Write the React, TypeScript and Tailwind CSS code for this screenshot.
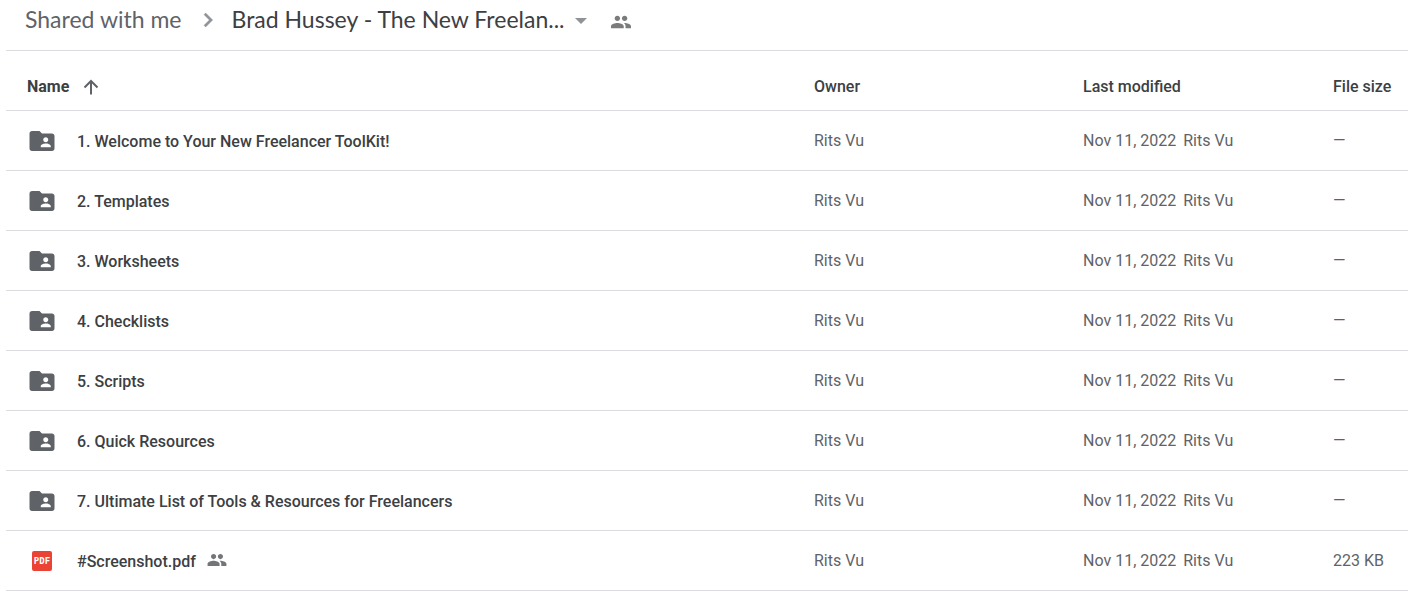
import React from 'react';

interface FileItem {
    name: string;
    type: 'folder' | 'pdf';
    size: string;
}

const OWNER = 'Rits Vu';
const MODIFIED = 'Nov 11, 2022';

const files: FileItem[] = [
    { name: '1. Welcome to Your New Freelancer ToolKit!', type: 'folder', size: '—' },
    { name: '2. Templates', type: 'folder', size: '—' },
    { name: '3. Worksheets', type: 'folder', size: '—' },
    { name: '4. Checklists', type: 'folder', size: '—' },
    { name: '5. Scripts', type: 'folder', size: '—' },
    { name: '6. Quick Resources', type: 'folder', size: '—' },
    { name: '7. Ultimate List of Tools & Resources for Freelancers', type: 'folder', size: '—' },
    { name: '#Screenshot.pdf', type: 'pdf', size: '223 KB' },
];

const ChevronIcon = () => (
    <svg className="h-7 w-7 shrink-0 text-[#8f9297]" viewBox="0 0 24 24" fill="currentColor" aria-hidden="true">
        <path d="M8.6 16.6 13.2 12 8.6 7.4 10 6l6 6-6 6z" stroke="currentColor" strokeWidth="0.4" />
    </svg>
);

const SharedFolderIcon = () => (
    <svg className="h-[30px] w-[30px] text-[#5f6368]" viewBox="0 0 24 24" fill="currentColor" aria-hidden="true">
        <path d="M20 6h-8l-2-2H4c-1.1 0-2 .9-2 2v12c0 1.1.9 2 2 2h16c1.1 0 2-.9 2-2V8c0-1.1-.9-2-2-2zm-5 3c1.1 0 2 .9 2 2s-.9 2-2 2-2-.9-2-2 .9-2 2-2zm4 8h-8v-1c0-1.33 2.67-2 4-2s4 .67 4 2v1z" />
    </svg>
);

const PdfIcon = () => (
    <svg className="h-[30px] w-[30px]" viewBox="0 0 30 30" aria-hidden="true">
        <rect x="5" y="5" width="20" height="20" rx="2" fill="#ea4335" />
        <text x="15" y="18" textAnchor="middle" fill="#fff" className="font-['DejaVu_Sans_Mono',monospace] text-[9px] font-bold">
            PDF
        </text>
    </svg>
);

const PeopleIcon = ({ className }: { className: string }) => (
    <svg className={className} viewBox="1 5 22 14" fill="currentColor" aria-hidden="true">
        <path d="M16 11c1.66 0 2.99-1.34 2.99-3S17.66 5 16 5s-3 1.34-3 3 1.34 3 3 3zm-8 0c1.66 0 2.99-1.34 2.99-3S9.66 5 8 5 5 6.34 5 8s1.34 3 3 3zm0 2c-2.33 0-7 1.17-7 3.5V19h14v-2.5C15 14.17 10.33 13 8 13zm8 0c-.29 0-.62.02-.97.05 1.16.84 1.97 1.97 1.97 3.45V19h6v-2.5c0-2.33-4.67-3.5-7-3.5z" />
    </svg>
);

const Breadcrumbs = () => (
    <nav className="flex h-[50px] items-start pl-[19px] font-['Lato',sans-serif] text-[23px] leading-[38px]" aria-label="Breadcrumb">
        <a href="#shared" className="text-[#5f6368]">Shared with me</a>
        <span className="mr-[10px] ml-3 flex h-10 items-center">
            <ChevronIcon />
        </span>
        <button type="button" className="flex items-center whitespace-nowrap text-[#3c4043]">
            Brad Hussey - The New Freelan...
            <svg className="mt-1 ml-[10px] h-[6px] w-3 text-[#8f9297]" viewBox="0 0 12 6" fill="currentColor" aria-hidden="true">
                <path d="M0 0h12L6 6z" />
            </svg>
        </button>
        <button type="button" className="ml-6 flex h-11 items-center text-[#7a7b7d]" aria-label="Manage access">
            <PeopleIcon className="h-[14px] w-5" />
        </button>
    </nav>
);

const FileRow = ({ file }: { file: FileItem }) => (
    <tr className="h-[60px] border-b border-[#dadce0]">
        <td className="pl-[21px]">
            <div className="flex items-center">
                {file.type === 'folder' ? <SharedFolderIcon /> : <PdfIcon />}
                <span className="ml-5 pt-0.5 font-medium text-[#3c4043]">{file.name}</span>
                {file.type === 'pdf' && <PeopleIcon className="mb-0.5 ml-[11px] h-3 w-5 text-[#737579]" />}
            </div>
        </td>
        <td>{OWNER}</td>
        <td>
            <span className="mr-[7px]">{MODIFIED}</span>
            <span>{OWNER}</span>
        </td>
        <td>{file.size}</td>
    </tr>
);

const App: React.FC = () => {
    return (
        <main className="bg-white pl-1.5 font-['Roboto',sans-serif]">
            <Breadcrumbs />
            <table className="w-full table-fixed border-collapse border-t border-[#dadce0] text-left text-base text-[#5f6368]">
                <colgroup>
                    <col />
                    <col className="w-[269px]" />
                    <col className="w-[250px]" />
                    <col className="w-[75px]" />
                </colgroup>
                <thead>
                    <tr className="h-[60px] border-b border-[#dadce0] text-[#3c4043]">
                        <th className="pt-3 pl-[21px] font-bold">
                            <button type="button" className="flex items-center gap-3">
                                Name
                                <svg className="h-5 w-5 text-[#5f6368]" viewBox="0 0 20 20" fill="none" stroke="currentColor" strokeWidth="2" aria-hidden="true">
                                    <path d="M10 17.5V4M3.5 10.5 10 4l6.5 6.5" />
                                </svg>
                            </button>
                        </th>
                        <th className="pt-3 font-medium">Owner</th>
                        <th className="pt-3 font-medium">Last modified</th>
                        <th className="pt-3 font-medium whitespace-nowrap">File size</th>
                    </tr>
                </thead>
                <tbody>
                    {files.map((file) => (
                        <FileRow key={file.name} file={file} />
                    ))}
                </tbody>
            </table>
        </main>
    );
};

export default App;
